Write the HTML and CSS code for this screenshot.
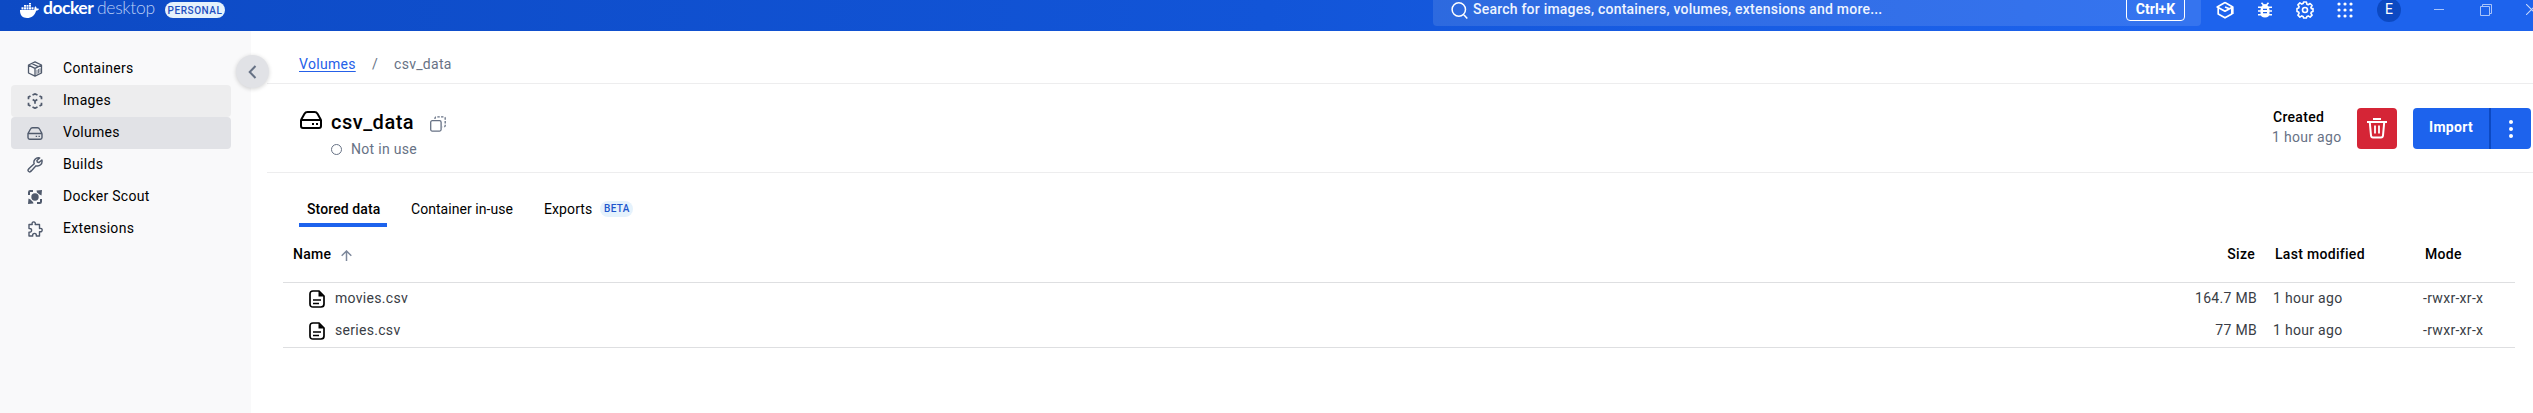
FILE: index.html
```html
<!DOCTYPE html>
<html lang="en">
<head>
<meta charset="utf-8">
<title>Docker Desktop</title>
<link rel="stylesheet" href="styles.css">
</head>
<body>
<svg class="defs" aria-hidden="true">
  <symbol id="drive" viewBox="0 0 22 18">
    <path d="M1 9 4.500 2.800Q5.500 1 7.500 1h7q2 0 3 1.800L21 9M1 9v6q0 2 2 2h16q2 0 2-2V9z" fill="none" stroke="currentColor" stroke-width="2" stroke-linejoin="round"/>
    <path d="M12 12h2v2h-2zM16 12h2v2h-2z" fill="currentColor"/>
  </symbol>
  <symbol id="file" viewBox="0 0 16 18">
    <path d="M4 1h6l5 5v8q0 3-3 3H4q-3 0-3-3V4q0-3 3-3z" fill="none" stroke="currentColor" stroke-width="1.700"/>
    <path d="M9.500 1v5.500H15z" fill="currentColor"/>
    <path d="M4 10h8M4 13.500h6" stroke="currentColor" stroke-width="1.300"/>
  </symbol>
</svg>
<header class="topbar">
  <div class="brand">
    <svg class="whale" viewBox="0 0 19 15"><path fill="#fff" d="M0 7h13.200c.8 0 1.300-.4 1.200-1.200-.1-1 .3-2 .9-2.600 1 .6 1.300 1.400 1.300 2.400.9-.1 1.900 0 2.400.4-.5 1.100-1.600 1.700-2.900 1.700C14.700 12.500 11.500 15 7 15 2.500 15-.2 12 0 7zM1.500 4.200h2v2.200h-2zM4 4.200h2v2.200H4zM6.500 4.200h2v2.200h-2zM9 4.200h2v2.200H9zM11.500 4.200h2v2.200h-2zM4 1.900h2v1.900H4zM6.500 1.900h2v1.900h-2zM9 1.900h2v1.900H9zM9 0h2v1.500H9z"/></svg>
    <span class="docker">docker</span><span class="desktop">desktop</span>
    <span class="plan">PERSONAL</span>
  </div>
  <div class="search">
    <svg class="lens" viewBox="0 0 17 17"><path d="M14.500 7.500a6.700 6.700 0 1 1-13.400 0 6.700 6.700 0 0 1 13.400 0zM12.600 12.600 16.300 16.500" fill="none" stroke="#fff" stroke-width="1.500"/></svg>
    <span class="search-text">Search for images, containers, volumes, extensions and more...</span>
    <kbd class="key">Ctrl+K</kbd>
  </div>
  <div class="tools">
    <svg class="t-learn" viewBox="0 0 18 18" fill="none" stroke="#fff" stroke-width="1.700" stroke-linejoin="round"><path d="M9 1.600 16.800 6v7M9 1.600 1.200 6 9 10.200 16.800 6M2.200 7v6L9 16.800 15.800 13V7M9 6l5 2"/></svg>
    <svg class="t-bug" viewBox="0 0 14 16"><path d="M4 4Q5 2 7 2t3 2q1.500 1.300 1.500 4v3q0 4.500-4.500 4.500T2.500 11V8Q2.500 5.300 4 4z" fill="#fff"/><path d="M3.500.8 5.500 3M10.500.8 8.500 3M0 5.300h14M0 9h14M0 12.700h14" stroke="#fff" stroke-width="1.600"/><path d="M5 7.400h4M5 10.700h4" stroke="#1d60e8" stroke-width="1.300"/></svg>
    <svg class="t-gear" viewBox="0 0 18 18" fill="none" stroke="#fff" stroke-width="1.600" stroke-linejoin="round"><path d="m7.600 1h2.800l.5 2.200 1.300.5 1.900-1.200 2 2-1.200 1.900.5 1.300L17 7.600v2.800l-1.600.5-.5 1.300 1.200 1.900-2 2-1.900-1.200-1.300.5-.5 1.600H7.600l-.5-1.600-1.300-.5-1.900 1.200-2-2 1.200-1.900-.5-1.300L1 10.400V7.600l1.600-.5.5-1.300-1.200-1.900 2-2 1.900 1.200 1.300-.5z"/><circle cx="9" cy="9" r="2.500"/></svg>
    <svg class="t-grid" viewBox="0 0 16 16"><path fill="none" stroke="#fff" stroke-width="3.200" stroke-linecap="round" d="M2 2h.01M8 2h.01M14 2h.01M2 8h.01M8 8h.01M14 8h.01M2 14h.01M8 14h.01M14 14h.01"/></svg>
    <span class="avatar">E</span>
    <svg class="t-min" viewBox="0 0 10 12"><path d="M0 5.500h10" stroke="#a9c4fa"/></svg>
    <svg class="t-max" viewBox="0 0 12 12"><path d="M.5 2.500h9v9h-9zM2.500 2.500v-2h9v9h-2" fill="none" stroke="#a9c4fa"/></svg>
    <svg class="t-close" viewBox="0 0 11 11"><path d="m0 0 11 11M11 0 0 11" stroke="#c5d7fb" stroke-width="1.100"/></svg>
  </div>
</header>
<div class="shell">
  <nav class="sidebar">
    <a class="item"><svg viewBox="0 0 16 16" fill="none" stroke="currentColor" stroke-width="1.300" stroke-linejoin="round"><path d="M8 .9 14.500 4v8L8 15.200 1.500 12V4zM1.500 4.200 8 7.300l6.500-3.100M8 7.300v7.900M4.700 2.500l6.500 3.200"/><path d="M10 8.800v4.400M11.500 8v4.400M13 7.300v4.400" stroke-width=".8"/></svg>Containers</a>
    <a class="item hover"><svg viewBox="0 0 16 16" fill="none" stroke="currentColor" stroke-width="1.700"><path d="M5.500 2 8 .9 10.500 2M12.500 2.900l2 1.200v2.200M14.500 9.700V12l-2 1.100M10.500 14 8 15.200 5.500 14M3.500 13.100l-2-1.100V9.700M1.500 6.300V4.100l2-1.200M5.700 6.500 8 8l2.300-1.500M8 8v2.700"/></svg>Images</a>
    <a class="item active"><svg class="drive-small" viewBox="0 0 16 13" fill="none" stroke="currentColor" stroke-width="1.400" stroke-linejoin="round"><path d="M1 6.500 3.500 2Q4 .8 5.500.8h5q1.500 0 2 1.200L15 6.500M1 6.500v4q0 1.700 1.700 1.700h10.600q1.700 0 1.700-1.700v-4zM8.700 9.400h1.400M11.500 9.400h1.400"/></svg>Volumes</a>
    <a class="item"><svg viewBox="0 0 16 16" fill="none" stroke="currentColor" stroke-width="1.400" stroke-linejoin="round"><path d="M9 8.800q2.600.8 4.600-1t1.300-4.900L12 5.600 10.300 5 9.900 3.500 12.700 1Q10 .2 8.100 2.200T7.200 6.700L1.500 12.100q-1 1.200 0 2.300t2.300 0zM3 13.100l.3-.3"/></svg>Builds</a>
    <a class="item"><svg viewBox="0 0 16 16"><circle cx="8" cy="8" r="3.700" fill="currentColor"/><path d="M2 6V3.200Q2 2 3.200 2H6M14 10v2.800q0 1.200-1.200 1.200H10" fill="none" stroke="currentColor" stroke-width="2"/><path d="M9.500 1.500 15 1l-.5 5.500-2-1L10 3.500zM1 15l.5-5.500 2 1L6 13l.5 1.500z" fill="currentColor"/></svg>Docker Scout</a>
    <a class="item"><svg viewBox="0 0 16 16" fill="none" stroke="currentColor" stroke-width="1.400" stroke-linejoin="round"><path d="M2 3.500h3.200C4.700 1.900 5.500.9 6.700.9s2 1 1.500 2.600h4.300v4c1.600-.5 2.700.3 2.700 1.600s-1.100 2-2.700 1.500V15H9.300c.3-1.800-.6-2.600-1.800-2.600S5.400 13.200 5.700 15H2v-3.900c1.800.3 2.600-.6 2.600-1.800S3.800 7.200 2 7.500z"/></svg>Extensions</a>
  </nav>
  <main class="main">
    <span class="collapse"><svg viewBox="0 0 9 14"><path d="M7.500 1 1.700 7l5.800 6" fill="none" stroke="#677285" stroke-width="2"/></svg></span>
    <div class="crumbs"><a class="crumb-link">Volumes</a><span class="slash">/</span><span>csv_data</span></div>
    <section class="summary">
      <div class="identity">
        <svg class="drive-big"><use href="#drive"/></svg>
        <div class="names">
          <div class="title-line"><h1 class="title">csv_data</h1>
            <svg class="copy" viewBox="0 0 16 16" fill="none" stroke="#677285" stroke-width="1.300"><rect x=".7" y="4.700" width="10.400" height="10.400" rx="1.500"/><path d="M5 3V2.200Q5 .8 6.500.8h7q1.700 0 1.700 1.700v7q0 1.500-1.500 1.500h-1" stroke-dasharray="2.400 1.300"/></svg></div>
          <div class="status"><span class="ring"></span>Not in use</div>
        </div>
      </div>
      <div class="actions">
        <div class="created"><div class="created-label">Created</div><div class="created-value">1 hour ago</div></div>
        <button class="delete"><svg viewBox="0 0 20 21" fill="none" stroke="#fff"><path d="M0 4h20M6 1h8" stroke-width="2"/><path d="M2.800 4.500 4 17.500Q4.200 19.500 6 19.500h8q1.800 0 2-2l1.200-13" stroke-width="2"/><path d="M8 7.500v8M12 7.500v8" stroke-width="1.800"/></svg></button>
        <div class="split"><button class="import">Import</button><button class="more"><svg viewBox="0 0 4 18"><path fill="none" stroke="#fff" stroke-width="4" stroke-linecap="round" d="M2 2h.01M2 9h.01M2 16h.01"/></svg></button></div>
      </div>
    </section>
    <div class="tabs">
      <a class="tab selected">Stored data</a><a class="tab t-use">Container in-use</a><a class="tab t-exports">Exports<span class="beta">BETA</span></a>
    </div>
    <div class="table">
      <div class="row head"><span class="c-name">Name<svg class="arrow" viewBox="0 0 11 11"><path d="M5.500 11V1M.7 5.700 5.500 1l4.800 4.700" fill="none" stroke="#7d889b" stroke-width="1.500"/></svg></span><span class="c-size">Size</span><span class="c-date">Last modified</span><span class="c-mode">Mode</span></div>
      <div class="body">
        <div class="row"><span class="c-name"><svg class="file"><use href="#file"/></svg>movies.csv</span><span class="c-size">164.7 MB</span><span class="c-date">1 hour ago</span><span class="c-mode">-rwxr-xr-x</span></div>
        <div class="row"><span class="c-name"><svg class="file"><use href="#file"/></svg>series.csv</span><span class="c-size">77 MB</span><span class="c-date">1 hour ago</span><span class="c-mode">-rwxr-xr-x</span></div>
      </div>
    </div>
  </main>
</div>
</body>
</html>
```
FILE: styles.css
```css
* { box-sizing: border-box; }
html, body { margin: 0; height: 100%; overflow: hidden; }
body { font: 14px/20px Roboto, sans-serif; letter-spacing: 0.3px; color: #000; background: #fff; display: flex; flex-direction: column; }
svg { display: block; flex: none; }
button { border: 0; padding: 0; font: inherit; letter-spacing: inherit; }
.defs { width: 0; height: 0; position: absolute; }

.topbar { height: 31px; flex: none; display: flex; align-items: flex-start; background: linear-gradient(90deg, #0d4ac4, #1255d8 50%, #1d63ed 85%); color: #fff; white-space: nowrap; }
.brand { width: 1433px; flex: none; display: flex; padding-left: 20px; height: 20px; align-items: flex-start; }
.whale { width: 19px; height: 15px; margin-top: 3px; }
.docker, .desktop { font: 17.5px/17px Lato, sans-serif; margin-top: -1px; }
.docker { font-weight: 700; width: 54px; margin-left: 4px; letter-spacing: -0.5px; }
.desktop { font-weight: 300; width: 68px; color: #b9cdf5; letter-spacing: -0.3px; }
.plan { width: 60px; height: 16px; margin-top: 2px; border-radius: 8px; background: #e5f2fc; color: #1d4fc0; font-size: 10px; line-height: 17px; letter-spacing: 0.55px; font-weight: 500; text-align: center; }
.search { width: 768px; height: 26px; flex: none; display: flex; background: rgba(255,255,255,.11); border-radius: 0 0 4px 4px; padding: 0 16px 0 18px; }
.lens { width: 17px; height: 17px; margin-top: 2px; }
.search-text { font-weight: 500; letter-spacing: 0.22px; margin: -1px auto 0 5px; color: #eef4ff; }
.key { height: 25px; width: 59px; margin-top: -4px; border: 1px solid #fff; border-radius: 4px; font: 700 14px/24px Roboto, sans-serif; letter-spacing: 0; text-align: center; }
.tools { display: flex; flex: none; }
.t-learn { width: 18px; height: 18px; margin: 1px 0 0 15px; }
.t-bug { width: 14px; height: 16px; margin: 2px 0 0 24px; }
.t-gear { width: 18px; height: 18px; margin: 1px 0 0 24px; }
.t-grid { width: 16px; height: 16px; margin: 2px 0 0 23px; }
.avatar { width: 24px; height: 24px; margin: -2px 0 0 24px; border-radius: 50%; background: #0c49c2; text-align: center; line-height: 23px; letter-spacing: 0; }
.t-min { width: 10px; height: 12px; margin: 4px 0 0 33px; }
.t-max { width: 12px; height: 12px; margin: 4px 0 0 36px; }
.t-close { width: 11px; height: 11px; margin: 4px 0 0 34px; }

.shell { flex: 1; display: flex; }
.sidebar { width: 251px; flex: none; background: #f9f9fa; padding: 22px 20px 0 11px; }
.item { height: 32px; display: flex; align-items: center; gap: 20px; padding: 0 0 2px 16px; border-radius: 4px; }
.item svg { width: 16px; height: 16px; color: #505a6c; margin-top: 2px; }
.item .drive-small { height: 13px; }
.hover { background: #ededee; }
.active { background: #e1e2e6; }

.main { flex: 1; min-width: 0; position: relative; padding-left: 16px; }
.collapse { position: absolute; left: -15px; top: 24px; width: 33px; height: 33px; border-radius: 50%; background: #e1e2e6; box-shadow: 0 1px 4px rgba(0,0,0,.18); display: flex; align-items: center; justify-content: center; }
.collapse svg { width: 9px; height: 14px; }
.crumbs { height: 53px; border-bottom: 1px solid #ededee; padding: 23px 0 0 32px; display: flex; color: #677285; }
.crumb-link { color: #2560e8; text-decoration: underline; text-underline-offset: 2px; width: 73px; }
.slash { width: 22px; }
.summary { height: 89px; border-bottom: 1px solid #ededee; display: flex; justify-content: space-between; padding: 24px 2px 0 33px; }
.identity { display: flex; gap: 9px; }
.drive-big { width: 22px; height: 18px; margin-top: 3px; }
.title-line { display: flex; gap: 16px; }
.title { margin: 0; font-size: 20px; line-height: 28px; font-weight: 500; letter-spacing: 0.5px; }
.copy { width: 16px; height: 16px; margin-top: 8px; }
.status { display: flex; align-items: center; gap: 9px; color: #677285; margin-top: 3px; }
.ring { width: 11px; height: 11px; border: 1px solid #677285; border-radius: 50%; }
.actions { display: flex; }
.created { width: 85px; margin-top: -1px; }
.created-label { font-weight: 500; padding-left: 1px; }
.created-value { color: #677285; }
.delete { width: 40px; height: 41px; border-radius: 4px; background: #d52536; display: flex; align-items: center; justify-content: center; }
.delete svg { width: 20px; height: 21px; }
.split { display: flex; width: 118px; height: 41px; margin-left: 16px; border-radius: 4px; overflow: hidden; background: #1d63ed; }
.import { width: 78px; background: transparent; color: #fff; font-weight: 700; border-right: 2px solid #0c49c2; padding: 0 0 3px; }
.more { flex: 1; background: transparent; display: flex; align-items: center; justify-content: center; }
.more svg { width: 4px; height: 18px; }

.tabs { display: flex; height: 54px; padding-left: 32px; align-items: flex-end; white-space: nowrap; }
.tab { height: 30px; padding: 2px 8px 0; }
.selected { width: 88px; border-bottom: 4px solid #1d63ed; font-weight: 500; letter-spacing: 0.1px; }
.t-use { margin-left: 16px; width: 118px; letter-spacing: 0.05px; }
.t-exports { margin-left: 15px; display: flex; letter-spacing: 0.1px; }
.beta { width: 33px; height: 16px; margin: 2px 0 0 8px; border-radius: 8px; background: #e5f2fc; color: #1d56cc; font-size: 10px; line-height: 16px; font-weight: 500; text-align: center; letter-spacing: 0.3px; }

.table { margin: 0 18px 0 16px; }
.row { display: grid; grid-template-columns: 1fr 102px 148px 110px; height: 32px; color: #393d45; }
.head { height: 56px; padding-top: 17px; color: #000; font-weight: 500; border-bottom: 1px solid #dedfe1; }
.c-name { display: flex; }
.c-size { text-align: right; }
.c-date { padding-left: 16px; }
.c-mode { padding-left: 18px; }
.head .c-name { padding-left: 10px; }
.head .c-size { padding-right: 2px; }
.head .c-date { padding-left: 18px; }
.head .c-mode { padding-left: 20px; }
.arrow { width: 11px; height: 11px; margin: 6px 0 0 10px; }
.body { border-bottom: 1px solid #dedfe1; height: 65px; }
.body .row { padding-top: 5px; }
.body .c-name { padding-left: 26px; }
.file { width: 16px; height: 18px; margin: 2px 10px 0 0; color: #000; }
```
